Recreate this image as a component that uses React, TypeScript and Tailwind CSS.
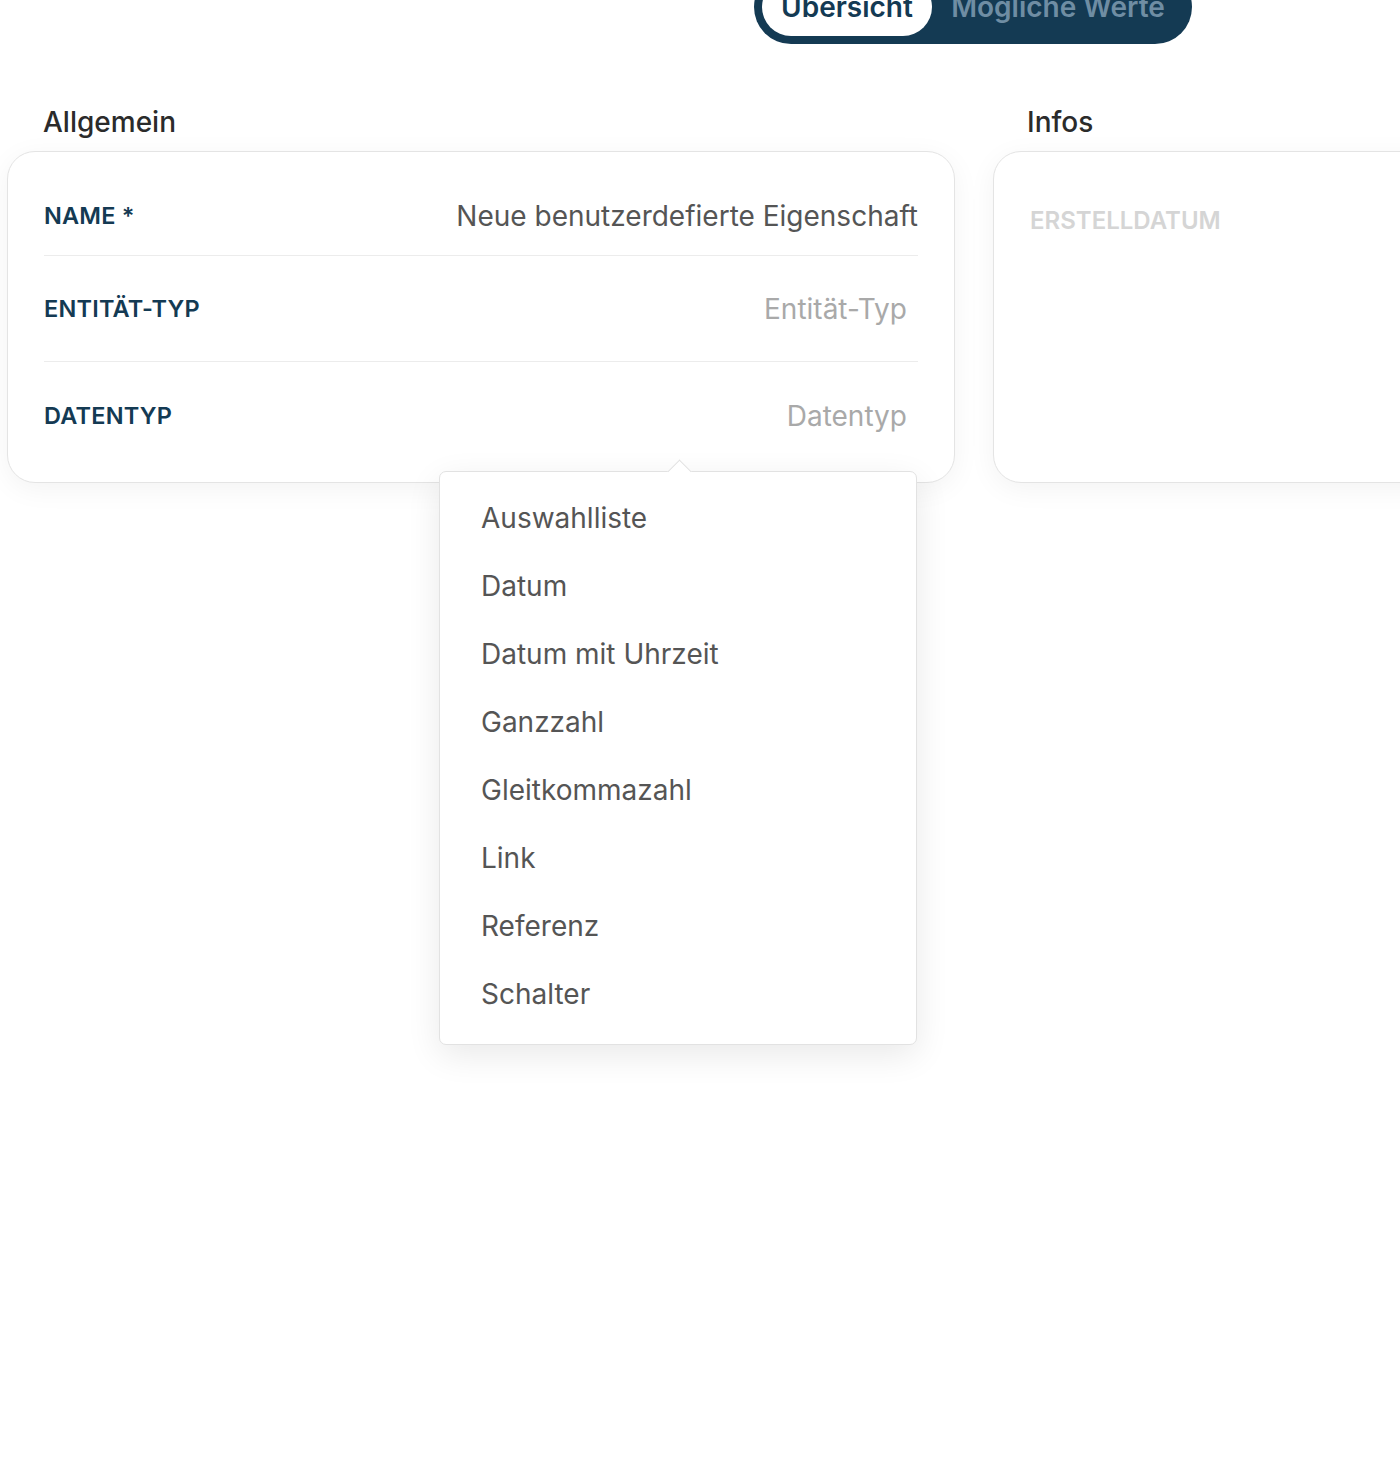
import React from "react";

const items = [
  "Auswahlliste",
  "Datum",
  "Datum mit Uhrzeit",
  "Ganzzahl",
  "Gleitkommazahl",
  "Link",
  "Referenz",
  "Schalter",
];

export default function App() {
  return (
    <div
      className="w-[1400px] h-[1480px] overflow-hidden bg-white"
      style={{ fontFamily: "Inter, 'Noto Sans', sans-serif" }}
    >
      {/* Toggle */}
      <div className="ml-[754px] -mt-[30px] flex w-[438px] h-[74px] items-center rounded-full bg-[#143a53] p-[8px]">
        <div className="flex h-[58px] w-[170px] items-center justify-center rounded-full bg-white text-[28px] font-semibold text-[#143a53]">
          Übersicht
        </div>
        <div className="flex h-[58px] flex-1 items-center justify-center text-[28px] font-semibold text-[#6f8da3]">
          Mögliche Werte
        </div>
      </div>

      {/* Columns */}
      <div className="mt-[61px] ml-[7px] flex gap-[38px]">
        {/* Allgemein */}
        <div className="w-[948px] shrink-0">
          <div className="pl-[36px] text-[28px] leading-[34px] font-medium text-[#2b2b2b] mb-[12px]">
            Allgemein
          </div>
          <div className="relative h-[332px] rounded-[28px] border border-[#e4e4e4] bg-white px-[36px] pt-[24px] shadow-[0_6px_28px_rgba(0,0,0,0.05)]">
            <div className="flex h-[80px] items-center justify-between border-b border-[#ececec]">
              <span className="text-[23.5px] font-semibold tracking-[0.2px] text-[#143a53]">NAME *</span>
              <span className="text-[28px] text-[#555555]">Neue benutzerdefierte Eigenschaft</span>
            </div>
            <div className="flex h-[106px] items-center justify-between border-b border-[#ececec]">
              <span className="text-[23.5px] font-semibold tracking-[0.2px] text-[#143a53]">ENTITÄT-TYP</span>
              <span className="pr-[11px] text-[28px] text-[#a9a9a9]">Entität-Typ</span>
            </div>
            <div className="flex h-[107px] items-center justify-between">
              <span className="text-[23.5px] font-semibold tracking-[0.2px] text-[#143a53]">DATENTYP</span>
              <span className="pr-[11px] text-[28px] text-[#a9a9a9]">Datentyp</span>
            </div>

            {/* Dropdown */}
            <div className="absolute left-[431px] top-[319px] z-10 w-[478px] rounded-[7px] border border-[#e2e2e2] bg-white pt-[12px] pb-[16px] shadow-[0_10px_34px_rgba(0,0,0,0.09)]">
              <div className="absolute -top-[9px] left-[231px] h-[17px] w-[17px] rotate-45 border-l border-t border-[#e2e2e2] bg-white" />
              {items.map((it) => (
                <div
                  key={it}
                  className="relative flex h-[68px] items-center pl-[41px] text-[28px] text-[#555555]"
                >
                  {it}
                </div>
              ))}
            </div>
          </div>
        </div>

        {/* Infos */}
        <div className="w-[480px] shrink-0">
          <div className="pl-[34px] text-[28px] leading-[34px] font-medium text-[#2b2b2b] mb-[12px]">
            Infos
          </div>
          <div className="h-[332px] rounded-[28px] border border-[#e4e4e4] bg-white px-[36px] pt-[52px] shadow-[0_6px_28px_rgba(0,0,0,0.05)]">
            <div className="text-[24px] leading-[34px] font-semibold text-[#d5d5d5]">ERSTELLDATUM</div>
          </div>
        </div>
      </div>
    </div>
  );
}
